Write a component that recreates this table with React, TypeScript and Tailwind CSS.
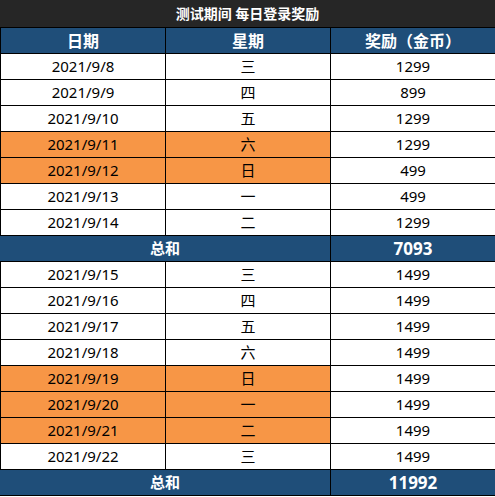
import React from 'react';

type Row = { date: string; day: string; coins: string; hot?: boolean };

const week1: Row[] = [
  { date: '2021/9/8', day: '三', coins: '1299' },
  { date: '2021/9/9', day: '四', coins: '899' },
  { date: '2021/9/10', day: '五', coins: '1299' },
  { date: '2021/9/11', day: '六', coins: '1299', hot: true },
  { date: '2021/9/12', day: '日', coins: '499', hot: true },
  { date: '2021/9/13', day: '一', coins: '499' },
  { date: '2021/9/14', day: '二', coins: '1299' },
];

const week2: Row[] = [
  { date: '2021/9/15', day: '三', coins: '1499' },
  { date: '2021/9/16', day: '四', coins: '1499' },
  { date: '2021/9/17', day: '五', coins: '1499' },
  { date: '2021/9/18', day: '六', coins: '1499' },
  { date: '2021/9/19', day: '日', coins: '1499', hot: true },
  { date: '2021/9/20', day: '一', coins: '1499', hot: true },
  { date: '2021/9/21', day: '二', coins: '1499', hot: true },
  { date: '2021/9/22', day: '三', coins: '1499' },
];

function DataRow({ row }: { row: Row }) {
  const side = row.hot ? 'bg-[#f79646]' : 'bg-white';
  return (
    <div className="flex h-[26px] border-t border-black text-[15px] text-black">
      <div className={`${side} flex w-[166px] shrink-0 items-center justify-center border-l border-r border-black`}>
        {row.date}
      </div>
      <div className={`${side} flex w-[165px] shrink-0 items-center justify-center border-r border-black`}>
        {row.day}
      </div>
      <div className="flex flex-1 items-center justify-center bg-white">{row.coins}</div>
    </div>
  );
}

function SumRow({ total }: { total: string }) {
  return (
    <div className="flex h-[26px] border-t border-black bg-[#1f4e79] font-bold text-white">
      <div className="flex w-[331px] shrink-0 items-center justify-center border-r border-black text-[15px]">
        总和
      </div>
      <div className="flex flex-1 items-center justify-center text-[17px]">{total}</div>
    </div>
  );
}

export default function App() {
  return (
    <div
      className="w-[495px] bg-white"
      style={{ fontFamily: '"Noto Sans", "Noto Sans CJK SC", sans-serif' }}
    >
      <div className="flex h-[27px] items-center justify-center bg-[#262626] text-[14px] font-bold text-white">
        测试期间 每日登录奖励
      </div>

      <div className="flex h-[26px] border-t border-black bg-[#1f4e79] text-[16px] font-bold text-white">
        <div className="flex w-[166px] shrink-0 items-center justify-center border-l border-r border-black">
          日期
        </div>
        <div className="flex w-[165px] shrink-0 items-center justify-center border-r border-black">
          星期
        </div>
        <div className="flex flex-1 items-center justify-center">奖励（金币）</div>
      </div>

      {week1.map((r) => (
        <DataRow key={r.date} row={r} />
      ))}
      <SumRow total="7093" />

      {week2.map((r) => (
        <DataRow key={r.date} row={r} />
      ))}
      <div className="border-b border-black">
        <SumRow total="11992" />
      </div>
    </div>
  );
}
